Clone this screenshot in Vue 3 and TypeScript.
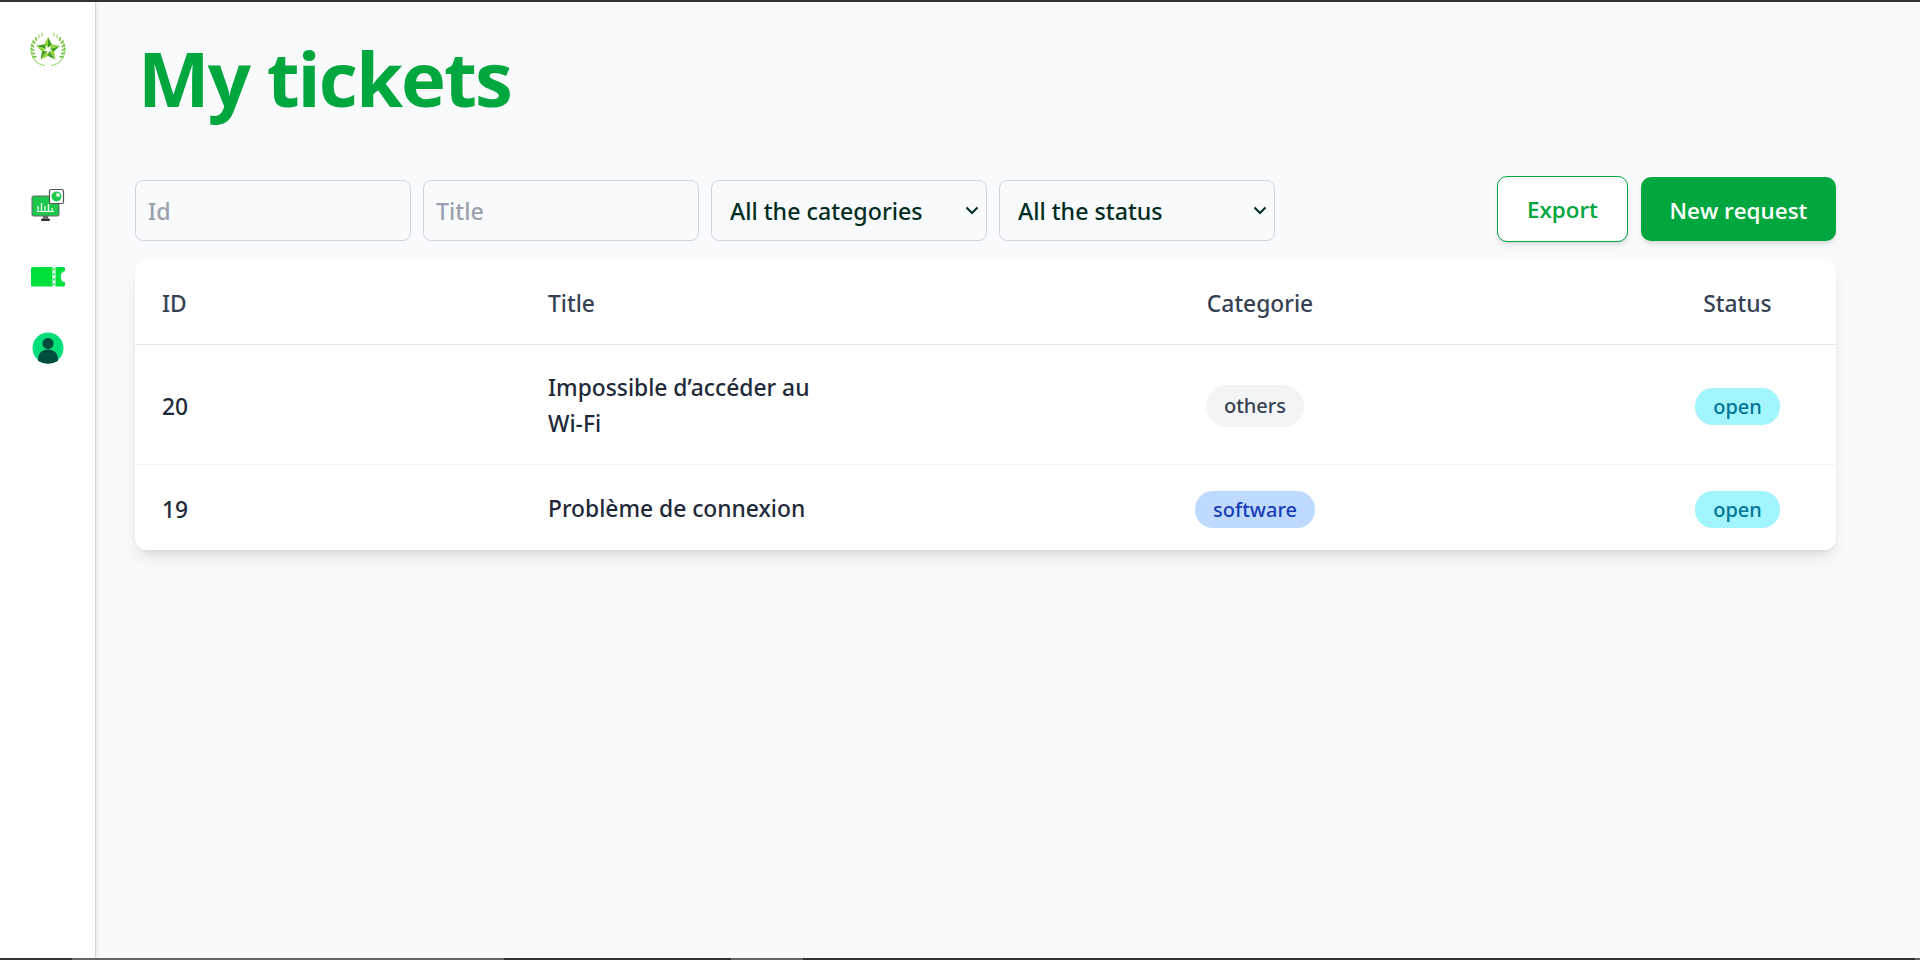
<script setup lang="ts">
interface Ticket {
  id: number
  title: string
  category: string
  categoryClass: string
  status: string
}

const tickets: Ticket[] = [
  { id: 20, title: 'Impossible d’accéder au Wi-Fi', category: 'others', categoryClass: 'gray', status: 'open' },
  { id: 19, title: 'Problème de connexion', category: 'software', categoryClass: 'blue', status: 'open' },
]
const leaves = [0, 72, 144, 216, 288]
// wheat grains on the logo wreath, angle from the top of the ring
const grains = [22, 36, 50, 64, 78, 92, 106, 120]
</script>

<template>
  <div class="screen">
    <div class="topline"></div>
    <div class="app">
      <aside class="sidebar">
        <svg class="logo" viewBox="0 0 36 36" width="36" height="36">
          <g v-for="a in leaves" :key="a" :transform="`rotate(${a} 18 18.500)`">
            <path d="M18 6 L22 13.800 L18 16.500 Z" fill="#3f9e1f" />
            <path d="M18 6 L14 13.800 L18 16.500 Z" fill="#93d43f" />
          </g>
          <path d="M15 34.500 C6 33.500 1 26 1 18 C1 15 1.800 12 3.500 9.500" fill="none" stroke="#a5dc7e" stroke-width="1.200" />
          <path d="M21 34.500 C30 33.500 35 26 35 18 C35 15 34.200 12 32.500 9.500" fill="none" stroke="#a5dc7e" stroke-width="1.200" />
          <g v-for="a in grains" :key="a" :opacity="a < 50 ? 0.45 : 0.9">
            <ellipse cx="18" cy="2.400" rx="1" ry="2.300" fill="#6fc23f" :transform="`rotate(${a} 18 18) rotate(-30 18 2.400)`" />
            <ellipse cx="18" cy="2.400" rx="1" ry="2.300" fill="#6fc23f" :transform="`rotate(${-a} 18 18) rotate(30 18 2.400)`" />
          </g>
        </svg>
        <nav class="nav">
          <svg viewBox="0 0 34 34" width="34" height="34">
            <rect x="1" y="8" width="27" height="20" rx="1.500" fill="#1ec84f" stroke="#666" stroke-width="1" />
            <path d="M12 28 h5 v2.500 h-5 z" fill="#666" />
            <rect x="10" y="30.500" width="9" height="2.500" rx="1.200" fill="#333" />
            <path d="M6 23.500 h17" stroke="#fff" stroke-width="1" fill="none" />
            <path d="M7 23 v-5 M10.500 23 v-8 M14 23 v-5 M17.500 23 v-7 M21 23 v-3" stroke="#e4f8e8" stroke-width="1.300" fill="none" />
            <rect x="18.500" y="1.500" width="14" height="14" rx="1.500" fill="#fff" stroke="#555" stroke-width="1.200" />
            <circle cx="25.500" cy="8.500" r="5" fill="#1ec84f" />
            <path d="M25.500 8.500 L25.500 5 A3.500 3.500 0 0 1 29 8.500 Z" fill="#fff" />
          </svg>
          <svg viewBox="0 0 34 20" width="34" height="20">
            <path d="M1.500 0 H21.500 V19.500 H1.500 Q0 19.500 0 18 V1.500 Q0 0 1.500 0 Z" fill="#00e03a" />
            <path d="M24.500 0 H32.500 Q34 0 34 1.500 V4 A6 6 0 0 0 34 15.500 V18 Q34 19.500 32.500 19.500 H24.500 Z" fill="#00e03a" />
            <path d="M23 1 V19" stroke="#00e03a" stroke-width="1.300" stroke-dasharray="2.500 2.500" />
          </svg>
          <svg viewBox="0 0 32 32" width="32" height="32">
            <circle cx="16" cy="16" r="15.500" fill="#04df7c" />
            <circle cx="16" cy="11.500" r="5.500" fill="#014d3d" />
            <path d="M6 29 Q5.500 18 16 17.500 Q26.500 18 26 29 Q21 31.700 16 31.700 Q11 31.700 6 29 Z" fill="#014d3d" />
          </svg>
        </nav>
      </aside>

      <main class="content">
        <h1 class="title">My tickets</h1>

        <div class="toolbar">
          <div class="filters">
            <input class="field" type="text" placeholder="Id" />
            <input class="field" type="text" placeholder="Title" />
            <select class="field select">
              <option>All the categories</option>
            </select>
            <select class="field select">
              <option>All the status</option>
            </select>
          </div>
          <div class="actions">
            <button class="btn outline">Export</button>
            <button class="btn solid">New request</button>
          </div>
        </div>

        <section class="table">
          <div class="row head">
            <div class="c-id">ID</div>
            <div class="c-title">Title</div>
            <div class="c-cat">Categorie</div>
            <div class="c-status">Status</div>
          </div>
          <div v-for="t in tickets" :key="t.id" class="row body">
            <div class="c-id">{{ t.id }}</div>
            <div class="c-title">{{ t.title }}</div>
            <div class="c-cat"><span class="badge" :class="t.categoryClass">{{ t.category }}</span></div>
            <div class="c-status"><span class="badge cyan">{{ t.status }}</span></div>
          </div>
        </section>
      </main>
    </div>
    <div class="bottomline">
      <span class="dark" style="width: 72px"></span>
      <span class="mid" style="width: 432px"></span>
      <span class="dark" style="width: 227px"></span>
      <span class="mid" style="width: 72px"></span>
      <span class="dark" style="flex: 1"></span>
      <span class="mid" style="width: 5px"></span>
    </div>
  </div>
</template>

<style>
body {
  margin: 0;
}
</style>

<style scoped>
.screen {
  display: flex;
  flex-direction: column;
  height: 960px;
  overflow: hidden;
  font-family: "Noto Sans", "Open Sans", sans-serif;
  color: #1e2939;
  background: #f9fafb;
}
.topline {
  height: 2px;
  background: #333;
}
.bottomline {
  display: flex;
  height: 2px;
}
.bottomline .dark {
  background: #333;
}
.bottomline .mid {
  background: #666;
}
.app {
  flex: 1;
  display: flex;
  min-height: 0;
}
.sidebar {
  width: 95px;
  flex: none;
  display: flex;
  flex-direction: column;
  align-items: center;
  background: #fff;
  border-right: 1px solid #d1d5dc;
  box-shadow: 1px 0 3px rgba(0, 0, 0, 0.08);
  padding-top: 29px;
}
.logo {
  display: block;
}
.nav {
  margin-top: 121px;
  display: flex;
  flex-direction: column;
  align-items: center;
  gap: 45px;
}
.nav svg {
  display: block;
}
.content {
  flex: 1;
  padding: 0 84px 0 39px;
}
.title {
  margin: 0;
  padding: 26px 0 0 3px;
  font-family: "Open Sans", sans-serif;
  font-size: 76px;
  line-height: 100px;
  font-weight: 700;
  letter-spacing: -2px;
  color: #00a63e;
}
.toolbar {
  margin-top: 48px;
  display: flex;
  justify-content: space-between;
  align-items: flex-start;
}
.filters {
  display: flex;
  gap: 12px;
  margin-top: 4px;
}
.field {
  box-sizing: border-box;
  width: 276px;
  height: 61px;
  padding: 0 12px;
  border: 1px solid #d1d5dc;
  border-radius: 8px;
  background: transparent;
  font-family: inherit;
  font-size: 23.200px;
  font-weight: 500;
  color: #002c22;
  outline: none;
}
.field::placeholder {
  color: #99a1af;
}
.select {
  appearance: none;
  padding-left: 18px;
  background: url("data:image/svg+xml,%3Csvg xmlns='http://www.w3.org/2000/svg' width='14' height='9'%3E%3Cpath d='M1.500 1.500 L7 7 L12.500 1.500' fill='none' stroke='%23002c22' stroke-width='2'/%3E%3C/svg%3E") no-repeat right 7px center;
}
.actions {
  display: flex;
  gap: 13px;
  align-items: center;
  height: 66px;
}
.btn {
  padding-top: 2px;
  border-radius: 10px;
  font-family: "Open Sans", sans-serif;
  font-size: 22.400px;
  font-weight: 600;
  box-shadow: 0 4px 6px -1px rgba(0, 0, 0, 0.1), 0 2px 4px -2px rgba(0, 0, 0, 0.1);
}
.outline {
  width: 131px;
  height: 66px;
  background: #fff;
  color: #00a63e;
  border: 1px solid #00a63e;
}
.solid {
  width: 195px;
  height: 64px;
  padding-top: 4px;
  background: #00a63e;
  color: #fff;
  border: 0;
}
.table {
  margin-top: 18px;
  background: #fff;
  border-radius: 12px;
  box-shadow: 0 10px 15px -3px rgba(0, 0, 0, 0.1), 0 4px 6px -4px rgba(0, 0, 0, 0.1);
  font-size: 22.800px;
  font-weight: 500;
}
.row {
  display: grid;
  grid-template-columns: 386px 630px 208px 1fr;
  align-items: center;
  box-sizing: border-box;
  padding-top: 3px;
}
.head {
  height: 85px;
  color: #364153;
  border-bottom: 1px solid #e5e7eb;
}
.head .c-cat {
  padding-left: 10px;
}
.body:nth-child(2) {
  height: 120px;
  border-bottom: 1px solid #f3f4f6;
}
.body:nth-child(3) {
  height: 85px;
}
.c-id {
  padding-left: 27px;
}
.c-title {
  padding-left: 27px;
  max-width: 275px;
  line-height: 36px;
}
.c-cat,
.c-status {
  text-align: center;
}
.c-status {
  padding-left: 280px;
}
.badge {
  display: inline-block;
  padding: 0 18px;
  border-radius: 18px;
  line-height: 37px;
  font-size: 20px;
  font-weight: 500;
}
.gray {
  background: #f3f4f6;
  color: #364153;
  line-height: 42px;
  border-radius: 21px;
}
.blue {
  background: #bedbff;
  color: #193cb8;
}
.cyan {
  background: #a2f4fd;
  color: #007595;
}
</style>
